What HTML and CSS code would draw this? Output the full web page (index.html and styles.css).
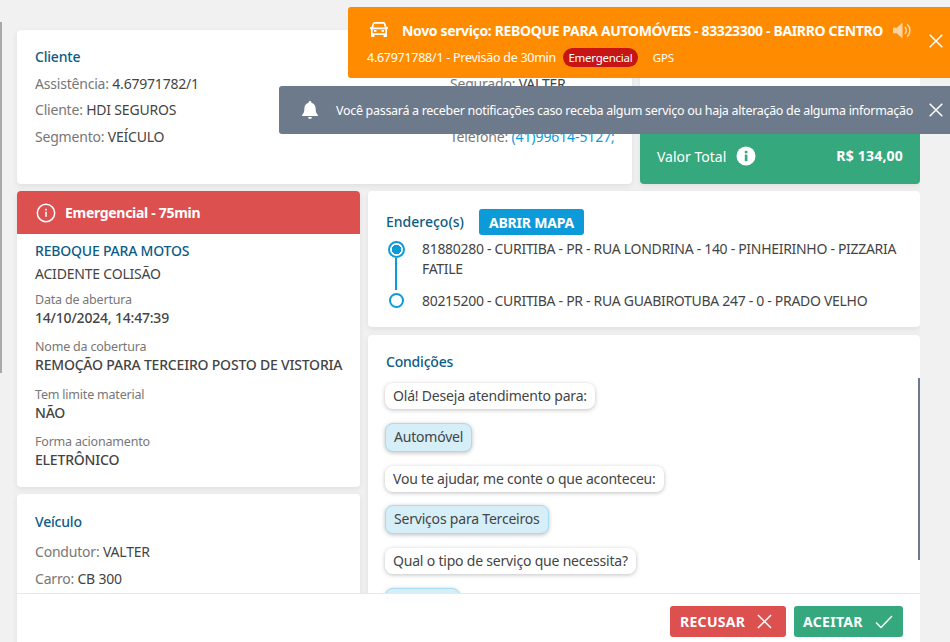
FILE: index.html
```html
<!DOCTYPE html>
<html lang="pt-BR">
<head>
<meta charset="utf-8">
<title>Serviço</title>
<link rel="stylesheet" href="styles.css">
</head>
<body>
<div class="edge"></div>
<main class="page">
  <section class="top-row">
    <div class="card client">
      <div class="col">
        <h2 class="title">Cliente</h2>
        <p class="line"><span>Assistência:</span> 4.67971782/1</p>
        <p class="line"><span>Cliente:</span> HDI SEGUROS</p>
        <p class="line"><span>Segmento:</span> VEÍCULO</p>
      </div>
      <div class="col-right">
        <p class="line"><span>Segurado:</span> VALTER</p>
        <p class="line line-phone"><span>Telefone:</span> <a class="phone">(41)99614-5127;</a></p>
      </div>
    </div>
    <div class="values">
      <div class="values-white"></div>
      <div class="total">
        <span class="total-label">Valor Total
          <svg class="total-info" viewBox="0 0 20 20"><circle cx="10" cy="10" r="9.5" fill="#fff"/><rect x="8.8" y="8.6" width="2.6" height="6.6" fill="#35a97d"/><rect x="8.8" y="4.8" width="2.6" height="2.5" fill="#35a97d"/></svg>
        </span>
        <strong class="total-value">R$ 134,00</strong>
      </div>
    </div>
  </section>

  <section class="main-row">
    <div class="left">
      <div class="card service">
        <div class="alert">
          <svg class="alert-icon" viewBox="0 0 20 20"><circle cx="10" cy="10" r="8.7" fill="none" stroke="#fff" stroke-width="1.5"/><rect x="9.2" y="8.8" width="1.6" height="5" fill="#fff"/><rect x="9.2" y="5.8" width="1.6" height="1.7" fill="#fff"/></svg>
          Emergencial - 75min
        </div>
        <div class="service-body">
          <h3 class="service-name">REBOQUE PARA MOTOS</h3>
          <p class="service-cause">ACIDENTE COLISÃO</p>
          <div class="field"><label>Data de abertura</label><strong>14/10/2024, 14:47:39</strong></div>
          <div class="field"><label>Nome da cobertura</label><strong>REMOÇÃO PARA TERCEIRO POSTO DE VISTORIA</strong></div>
          <div class="field"><label>Tem limite material</label><strong>NÃO</strong></div>
          <div class="field"><label>Forma acionamento</label><strong>ELETRÔNICO</strong></div>
        </div>
      </div>
      <div class="card vehicle">
        <h2 class="title">Veículo</h2>
        <p class="line"><span>Condutor:</span> VALTER</p>
        <p class="line"><span>Carro:</span> CB 300</p>
      </div>
    </div>
    <div class="right">
      <div class="card address">
        <div class="address-head">
          <h2 class="title">Endereço(s)</h2>
          <button class="map-btn">ABRIR MAPA</button>
        </div>
        <div class="stop">
          <div class="marker"><span class="dot dot-active"></span><span class="rail"></span></div>
          <p>81880280 - CURITIBA - PR - RUA LONDRINA - 140 - PINHEIRINHO - PIZZARIA FATILE</p>
        </div>
        <div class="stop">
          <div class="marker"><span class="dot"></span></div>
          <p>80215200 - CURITIBA - PR - RUA GUABIROTUBA 247 - 0 - PRADO VELHO</p>
        </div>
      </div>
      <div class="card conditions">
        <h2 class="title">Condições</h2>
        <div class="chat">
          <span class="bubble">Olá! Deseja atendimento para:</span>
          <span class="bubble answer">Automóvel</span>
          <span class="bubble">Vou te ajudar, me conte o que aconteceu:</span>
          <span class="bubble answer">Serviços para Terceiros</span>
          <span class="bubble">Qual o tipo de serviço que necessita?</span>
          <span class="bubble answer">Reboque</span>
        </div>
        <div class="scrollbar"></div>
      </div>
    </div>
  </section>
</main>

<footer class="footer">
  <button class="action refuse">RECUSAR
    <svg class="action-icon" viewBox="0 0 16 16"><path d="M1 1l14 14M15 1L1 15" fill="none" stroke="#fff" stroke-width="1.6"/></svg>
  </button>
  <button class="action accept">ACEITAR
    <svg class="action-icon accept-icon" viewBox="0 0 18 14"><path d="M1 7.5l5 5L17 1" fill="none" stroke="#fff" stroke-width="1.5"/></svg>
  </button>
</footer>

<div class="toast toast-orange">
  <div class="toast-head">
    <svg class="car" viewBox="0 0 18 16"><path fill="#fff" fill-rule="evenodd" d="M4.6 0h8.8c.9 0 1.7.6 2 1.4L16.600 5H18v2h-1v7c0 .6-.4 1-1 1h-1.500c-.6 0-1-.4-1-1v-1h-9v1c0 .6-.4 1-1 1H2c-.6 0-1-.4-1-1V7H0V5h1.400l1.200-3.600C2.900.6 3.700 0 4.600 0zM4.800 1.700c-.3 0-.5.1-.6.4L3.200 5.500h11.600l-1-3.400c-.1-.3-.3-.4-.6-.4zM2.700 7.200v4.100h12.600V7.200zM4 8h2.500v1.800H4zm7.500 0H14v1.800h-2.500z"/></svg>
    <strong class="toast-title">Novo serviço: REBOQUE PARA AUTOMÓVEIS - 83323300 - BAIRRO CENTRO</strong>
    <svg class="speaker" viewBox="0 0 20 18"><path fill="#ffd3a0" d="M0 6h4l6-5.500v17L4 12H0z"/><path fill="none" stroke="#ffd3a0" stroke-width="1.700" d="M12.500 5.500c2 2 2 5 0 7M15 2.500c3.800 3.500 3.800 9.500 0 13"/></svg>
  </div>
  <div class="toast-sub">
    <span>4.67971788/1 - Previsão de 30min</span>
    <span class="pill">Emergencial</span>
    <span class="gps">GPS</span>
  </div>
  <svg class="close close-orange" viewBox="0 0 14 14"><path d="M.7.7l12.600 12.600M13.300.7L.7 13.300" fill="none" stroke="#fff" stroke-width="1.500"/></svg>
</div>

<div class="toast toast-grey">
  <svg class="bell" viewBox="0 0 14 16"><path fill="#fff" d="M7 0c.7 0 1.200.5 1.200 1.200v.4C10.500 2.200 12 4.200 12 6.500c0 3.700 1 5 2 6v.9H0v-.9c1-1 2-2.300 2-6 0-2.300 1.500-4.300 3.800-4.900v-.4C5.800.5 6.300 0 7 0zM5.300 14.200h3.400C8.600 15.200 7.900 16 7 16s-1.600-.8-1.700-1.800z"/></svg>
  <span class="toast-msg">Você passará a receber notificações caso receba algum serviço ou haja alteração de alguma informação</span>
  <svg class="close close-grey" viewBox="0 0 14 14"><path d="M.7.7l12.600 12.600M13.300.7L.7 13.300" fill="none" stroke="#fff" stroke-width="1.500"/></svg>
</div>
</body>
</html>
```
FILE: styles.css
```css
* { box-sizing: border-box; }
html, body { margin: 0; height: 100%; overflow: hidden; }
body {
  background: #f1f1f1;
  color: #444;
  font-family: "Noto Sans", "Open Sans", sans-serif;
  font-size: 14px;
  letter-spacing: -0.2px;
}
p, h2, h3 { margin: 0; font-weight: 400; }
.edge { position: absolute; left: 0; top: 22px; width: 2px; height: 351px; background: #a9a9a9; }
.page { padding: 30px 0 0 17px; width: 920px; height: 642px; overflow: hidden; }
.card {
  background: #fff;
  border-radius: 4px;
  box-shadow: 0 2px 6px rgba(0, 0, 0, .08);
}
.top-row { display: grid; grid-template-columns: 615px 280px; gap: 8px; height: 154px; }
.client { display: flex; padding: 18px 0 0 18px; }
.col { width: 415px; flex: none; }
.col-right { padding-top: 26px; white-space: nowrap; }
.title { color: #0d5c85; font-size: 14px; line-height: 18px; margin-bottom: 8px; font-weight: 500; }
.line { line-height: 20px; margin-bottom: 6.400px; color: #444; }
.line span { color: #777; }
.line-phone { margin-top: 33px; }
.phone { color: #0d9ad8; letter-spacing: -0.1px; }
.values { display: flex; flex-direction: column; border-radius: 4px; overflow: hidden; box-shadow: 0 2px 6px rgba(0, 0, 0, .08); }
.values-white { flex: 1; background: #fff; }
.total { height: 74px; background: #35a97d; color: #fff; display: flex; align-items: flex-end; justify-content: space-between; padding: 0 17px 18px; }
.total-label { display: flex; align-items: center; gap: 10px; letter-spacing: 0; }
.total-info { width: 20px; height: 20px; }
.total-value { font-weight: 700; letter-spacing: .2px; margin-bottom: 1px; }
.main-row { display: grid; grid-template-columns: 343px 552px; gap: 8px; margin-top: 7px; }
.left { display: flex; flex-direction: column; gap: 7px; }
.right { display: flex; flex-direction: column; gap: 8px; }
.service { height: 296px; overflow: hidden; }
.alert { height: 43px; background: #dc5050; color: #fff; font-weight: 700; display: flex; align-items: center; gap: 9px; padding: 0 19px; letter-spacing: -0.3px; }
.alert-icon { width: 20px; height: 20px; }
.service-body { padding: 8px 18px; }
.service-name { color: #0d5c85; font-size: 14px; line-height: 18px; font-weight: 500; }
.service-cause { line-height: 20px; margin-top: 4px; }
.field { margin-top: 7px; display: flex; flex-direction: column; }
.field + .field { margin-top: 10.300px; }
.field label { color: #777; font-size: 12.500px; line-height: 17px; }
.field strong { color: #444; font-weight: 500; line-height: 20px; white-space: nowrap; }
.vehicle { padding: 19px 18px; height: 200px; }
.vehicle .title { margin-bottom: 11px; }
.vehicle .line { margin-bottom: 7px; }
.address { height: 136px; padding: 18px 18px; }
.address-head { display: flex; align-items: center; gap: 15px; }
.address-head .title { margin: 0; letter-spacing: 0; }
.map-btn { background: #0d9ad8; color: #fff; border: 0; border-radius: 3px; height: 26px; width: 105px; font: 700 14px "Noto Sans", sans-serif; letter-spacing: -0.2px; padding: 0; }
.stop { display: flex; gap: 16px; letter-spacing: -0.3px; }
.stop p { line-height: 19.500px; width: 480px; color: #444; }
.address-head + .stop { margin-top: 4px; }
.stop + .stop { margin-top: 13px; }
.marker { width: 20px; display: flex; flex-direction: column; align-items: center; padding-top: 2px; position: relative; }
.dot { width: 15px; height: 15px; border: 2px solid #0d9ad8; border-radius: 50%; background: #fff; flex: none; }
.dot-active { width: 17px; height: 17px; background: radial-gradient(circle, #0d9ad8 0 4.500px, #fff 5px); }
.rail { width: 2px; flex: 1; background: #0d9ad8; margin-bottom: -12px; }
.conditions { position: relative; height: 306px; padding: 18px 0 0 17px; overflow: hidden; }
.conditions .title { padding-left: 1px; }
.chat { display: flex; flex-direction: column; align-items: flex-start; gap: 13.800px; margin-top: 12px; }
.bubble { background: #fff; border-radius: 8px; box-shadow: 0 1px 4px rgba(0, 0, 0, .25); padding: 3px 8px; line-height: 20px; }
.answer { background: #d6eef8; border: 1px solid #a8dcf1; padding: 3px 8px; height: 29px; }
.scrollbar { position: absolute; right: 0; top: 43px; width: 2px; height: 182px; background: #6c7a8b; }
.footer { position: absolute; left: 17px; top: 593px; width: 903px; height: 49px; background: #fff; border-top: 1px solid #e8e8e8; display: flex; justify-content: flex-end; gap: 8px; padding: 12px 17px 0 0; }
.action { height: 31px; border: 0; border-radius: 3px; color: #fff; font: 700 14px "Noto Sans", sans-serif; letter-spacing: .3px; display: flex; align-items: center; gap: 12px; padding: 0 9px; }
.refuse { background: #dc5050; width: 116px; padding-left: 10px; }
.accept { background: #35a97d; width: 109px; }
.action-icon { width: 15px; height: 15px; flex: none; }
.accept-icon { width: 18px; height: 14px; }
.toast { position: absolute; right: 0; border-radius: 3px 0 0 3px; color: #fff; }
.toast-orange { top: 7px; width: 602px; height: 71px; background: #ff8c00; padding: 13px 0 0 19px; }
.toast-head { display: flex; align-items: center; height: 20px; padding-left: 3px; }
.car { width: 18px; height: 16px; flex: none; }
.toast-title { margin-left: 14px; font-size: 14px; font-weight: 700; letter-spacing: -0.35px; white-space: nowrap; }
.speaker { width: 19px; height: 19px; margin-left: 10px; flex: none; }
.toast-sub { display: flex; align-items: center; margin-top: 8px; font-size: 12.500px; letter-spacing: -0.27px; }
.pill { background: #c71414; border-radius: 10px; padding: 0 5.500px; line-height: 19px; font-size: 11.500px; margin-left: 7px; }
.gps { margin-left: 15px; font-size: 11.500px; }
.close { position: absolute; width: 14px; height: 14px; }
.close-orange { right: 7px; top: 27px; }
.close-grey { right: 7px; top: 17px; }
.toast-grey { top: 86px; width: 671px; height: 48px; background: #6c7a8b; display: flex; align-items: center; padding-left: 23px; }
.bell { width: 16px; height: 18px; flex: none; }
.toast-msg { margin-left: 18px; font-size: 12.500px; letter-spacing: -0.3px; white-space: nowrap; }
```
